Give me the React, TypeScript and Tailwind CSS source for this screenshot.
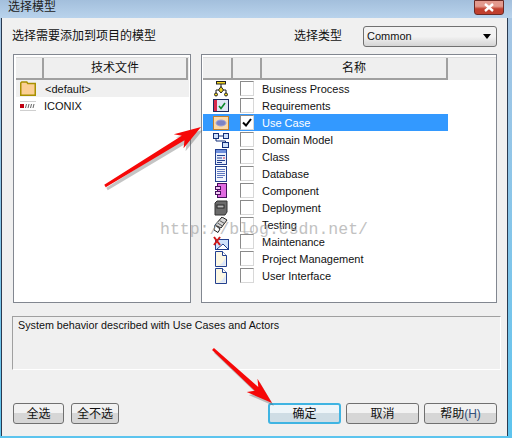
import { type ReactNode } from "react";

const FONT = "font-['Liberation_Sans','Noto_Sans_CJK_SC',sans-serif]";

function BusinessIcon() {
  return (
    <svg width="16" height="16" viewBox="0 0 16 16">
      <rect x="3.500" y="0.500" width="9" height="2.500" fill="#f2d41e" stroke="#222" />
      <path d="M8 3v3M3 12V9h10v3" fill="none" stroke="#222" />
      <path d="M8 5.500l2.500 3.500-2.500 3-2.500-3z" fill="#f2d41e" stroke="#222" />
      <circle cx="3" cy="13.500" r="1.500" fill="#f2d41e" stroke="#222" />
      <circle cx="13" cy="13.500" r="1.500" fill="#f2d41e" stroke="#222" />
    </svg>
  );
}

function RequirementsIcon() {
  return (
    <svg width="16" height="16" viewBox="0 0 16 16">
      <rect x="0.500" y="1.500" width="15" height="12" fill="#dfe6f5" stroke="#1c2a5c" />
      <rect x="1" y="2" width="3" height="11" fill="#d8284a" />
      <path d="M6 8l2 2.500 4-5.500" fill="none" stroke="#0a8a2a" strokeWidth="1.600" />
    </svg>
  );
}

function UseCaseIcon() {
  return (
    <svg width="16" height="16" viewBox="0 0 16 16">
      <rect x="0.500" y="1.500" width="15" height="13" fill="#fbd9a8" stroke="#c08030" />
      <ellipse cx="8" cy="8" rx="5" ry="3" fill="#7d83c4" stroke="#9da2d8" />
    </svg>
  );
}

function DomainIcon() {
  return (
    <svg width="16" height="16" viewBox="0 0 16 16">
      <rect x="0.500" y="1.500" width="5" height="5" fill="#cfe0fa" stroke="#14307a" />
      <rect x="10.500" y="1.500" width="5" height="5" fill="#cfe0fa" stroke="#14307a" />
      <rect x="9.500" y="10.500" width="6" height="5" fill="#cfe0fa" stroke="#14307a" />
      <path d="M5.500 4h5M3 6.500V9h9.500v1.500" fill="none" stroke="#14307a" />
    </svg>
  );
}

function ClassIcon() {
  return (
    <svg width="16" height="16" viewBox="0 0 16 16">
      <rect x="2.500" y="0.500" width="11" height="15" fill="#e9effc" stroke="#23408f" />
      <rect x="3" y="1" width="10" height="3" fill="#6f8fdc" />
      <path d="M4 6.500h8M4 9h5M4 11.500h8M4 13.500h5" stroke="#23408f" />
      <path d="M10 9h2" stroke="#d8284a" />
    </svg>
  );
}

function DatabaseIcon() {
  return (
    <svg width="16" height="16" viewBox="0 0 16 16">
      <rect x="2.500" y="0.500" width="11" height="15" fill="#f3f6fd" stroke="#23408f" />
      <path d="M4 3.500h8M4 5.500h8M4 7.500h8M4 9.500h8M4 11.500h6" stroke="#5f78bf" />
    </svg>
  );
}

function ComponentIcon() {
  return (
    <svg width="16" height="16" viewBox="0 0 16 16">
      <rect x="4.500" y="0.500" width="9" height="14" fill="#e06be0" stroke="#44105c" />
      <rect x="2.500" y="3.500" width="5" height="3" fill="#f4c8f4" stroke="#44105c" />
      <rect x="2.500" y="8.500" width="5" height="3" fill="#f4c8f4" stroke="#44105c" />
    </svg>
  );
}

function DeploymentIcon() {
  return (
    <svg width="16" height="16" viewBox="0 0 16 16">
      <path d="M2 3l2-2h10v11l-2 3H2z" fill="#6b6b6b" stroke="#333" />
      <rect x="4" y="5" width="7" height="3" fill="#b5b5b5" stroke="#2a2a2a" />
    </svg>
  );
}

function TestingIcon() {
  return (
    <svg width="16" height="16" viewBox="0 0 16 16">
      <path d="M2 8L9 0l5 3-6 8z" fill="#d6d6d6" stroke="#222" />
      <path d="M4.500 6l5 3M6.500 3.500l5 3" stroke="#555" />
      <path d="M2 8l5 4-2 3.500-4-2.500z" fill="#fff" stroke="#222" />
    </svg>
  );
}

function MaintenanceIcon() {
  return (
    <svg width="16" height="16" viewBox="0 0 16 16">
      <rect x="2.500" y="5.500" width="13" height="10" fill="#cfe2fb" stroke="#23408f" />
      <path d="M4 15l6-5 5 5" fill="#fff" stroke="#23408f" />
      <path d="M1 3l6 8M7 3l-6 8" stroke="#d01818" strokeWidth="2" />
    </svg>
  );
}

function PageIcon() {
  return (
    <svg width="16" height="16" viewBox="0 0 16 16">
      <path d="M2.500 0.500h7l4 4v11h-11z" fill="#fdf8e4" stroke="#23408f" />
      <path d="M9.500 0.500v4h4" fill="#fff" stroke="#23408f" />
      <path d="M3.500 14.500c4 0 7-3 9-8v8z" fill="#dbe6fa" />
    </svg>
  );
}

function FolderIcon() {
  return (
    <svg width="16" height="15" viewBox="0 0 16 15">
      <path d="M0.750 3.500V2l1-1h5l1 1.500h7.500v11.750h-14.500z" fill="#fbcf95" stroke="#a89000" strokeWidth="1.500" />
    </svg>
  );
}

function IconixIcon() {
  return (
    <svg width="16" height="10" viewBox="0 0 16 10">
      <path d="M0 0.500h16M0 9.500h16" stroke="#cfcfcf" />
      <rect x="0" y="3" width="4" height="4" fill="#c00010" />
      <path d="M5.500 7l1-4M8 7l1-4M10.500 7l1-4M13 7l1-4" stroke="#666" />
    </svg>
  );
}

const models: { name: string; icon: ReactNode; checked?: boolean; selected?: boolean }[] = [
  { name: "Business Process", icon: <BusinessIcon /> },
  { name: "Requirements", icon: <RequirementsIcon /> },
  { name: "Use Case", icon: <UseCaseIcon />, checked: true, selected: true },
  { name: "Domain Model", icon: <DomainIcon /> },
  { name: "Class", icon: <ClassIcon /> },
  { name: "Database", icon: <DatabaseIcon /> },
  { name: "Component", icon: <ComponentIcon /> },
  { name: "Deployment", icon: <DeploymentIcon /> },
  { name: "Testing", icon: <TestingIcon /> },
  { name: "Maintenance", icon: <MaintenanceIcon /> },
  { name: "Project Management", icon: <PageIcon /> },
  { name: "User Interface", icon: <PageIcon /> },
];

function HeaderCell({ width, children }: { width: string; children?: ReactNode }) {
  return (
    <div
      className={`${width} h-full flex items-center justify-center border-r-2 border-b-2 border-[#a0a0a0] text-[12px] text-[#111]`}
    >
      {children}
    </div>
  );
}

function Btn({ width, focused, children }: { width: string; focused?: boolean; children: ReactNode }) {
  return (
    <button
      className={`${width} h-[21px] flex items-center justify-center rounded-[3px] text-[12px] text-[#111] ${
        focused
          ? "border-2 border-[#3fb4e2] bg-gradient-to-b from-[#eef5f9] from-50% to-[#cfdde5] to-50%"
          : "border border-[#707070] bg-gradient-to-b from-[#f2f2f2] from-50% to-[#d6d6d6] to-50%"
      }`}
    >
      {children}
    </button>
  );
}

function Arrow({ x1, y1, x2, y2 }: { x1: number; y1: number; x2: number; y2: number }) {
  // tapered shaft plus a barbed head, with a soft grey shadow below it
  const ang = Math.atan2(y2 - y1, x2 - x1);
  const len = Math.hypot(x2 - x1, y2 - y1);
  const pt = (along: number, side: number) => {
    const x = x2 - along * Math.cos(ang) - side * Math.sin(ang);
    const y = y2 - along * Math.sin(ang) + side * Math.cos(ang);
    return `${x},${y}`;
  };
  const shape = [
    `${x2},${y2}`,
    pt(26, 9),
    pt(21, 2.6),
    pt(len, 1.4),
    pt(len, -1.4),
    pt(21, -2.6),
    pt(27, -8),
  ].join(" ");
  return (
    <g>
      <polygon points={shape} fill="#555" opacity="0.35" transform="translate(2 3)" />
      <polygon points={shape} fill="#f60808" />
    </g>
  );
}

export default function App() {
  return (
    <div className={`${FONT} relative w-[512px] h-[438px] overflow-hidden bg-gradient-to-b from-[#a9c6e4] to-[#5cc4ee] flex flex-col`}>
      {/* Title bar */}
      <div className="h-[18px] shrink-0 flex items-start justify-between pl-[8px] pr-[8px] bg-gradient-to-b from-[#a3bfdc] to-[#b9d3ec]">
        <span className="text-[12px] leading-[14px] text-[#222]">选择模型</span>
        <div className="w-[30px] h-[15px] rounded-b-[3px] border border-[#6b2a25] bg-gradient-to-b from-[#e39a8e] from-40% to-[#c0402f] to-60% flex items-center justify-center">
          <svg width="12" height="9" viewBox="0 0 12 9">
            <path d="M2 1l8 7M10 1L2 8" stroke="#fff" strokeWidth="2.400" />
          </svg>
        </div>
      </div>

      {/* Client area */}
      <div className="flex-1 ml-[1px] mr-[4px] mb-[2px] border-l border-r border-[#2a3a50] bg-[#f0f0f0] flex flex-col pl-[10px] pr-[9px]">
        <div className="h-[36px] shrink-0 flex items-center justify-between text-[12px] text-[#111]">
          <span>选择需要添加到项目的模型</span>
          <div className="flex items-center gap-[21px]">
            <span>选择类型</span>
            <div className="w-[134px] h-[21px] flex items-center justify-between pl-[3px] pr-[5px] rounded-[3px] border border-[#707070] bg-gradient-to-b from-[#f2f2f2] from-50% to-[#d4d4d4] text-[11px] text-[#111] mr-[1px]">
              <span>Common</span>
              <span className="w-0 h-0 border-l-[4px] border-r-[4px] border-t-[5px] border-l-transparent border-r-transparent border-t-black" />
            </div>
          </div>
        </div>

        <div className="h-[249px] shrink-0 flex gap-[10px] pl-[1px]">
          {/* Technology files */}
          <div className="w-[178px] border border-[#828790] bg-white pt-[2px] pl-[2px] pr-[1px]">
            <div className="h-[23px] flex bg-[#efefef] border-t border-[#ddd]">
              <HeaderCell width="w-[28px]" />
              <HeaderCell width="w-[144px]">技术文件</HeaderCell>
            </div>
            <div className="h-[17px] flex items-center bg-[#f0f0f0] text-[11px] text-[#111]">
              <span className="w-[28px] pl-[4px] flex">
                <FolderIcon />
              </span>
              <span className="pl-[1px] pt-[1px]">&lt;default&gt;</span>
            </div>
            <div className="h-[17px] flex items-center text-[11px] text-[#111]">
              <span className="w-[28px] pl-[4px] flex">
                <IconixIcon />
              </span>
              <span className="pt-[1px]">ICONIX</span>
            </div>
          </div>

          {/* Model list */}
          <div className="w-[296px] border border-[#828790] bg-white pt-[2px] pl-[1px]">
            <div className="h-[23px] flex bg-[#efefef] border-t border-[#ddd]">
              <HeaderCell width="w-[30px]" />
              <HeaderCell width="w-[29px]" />
              <HeaderCell width="w-[186px]">名称</HeaderCell>
            </div>
            {models.map((m) => (
              <div key={m.name} className="h-[17px] flex items-center text-[11px]">
                <span className={`w-[30px] h-full flex items-center pl-[10px] ${m.selected ? "bg-[#3399ff]" : ""}`}>
                  {m.icon}
                </span>
                <span className={`w-[29px] h-full flex items-center pl-[7px] ${m.selected ? "bg-[#3399ff]" : ""}`}>
                  <span className="w-[14px] h-[15px] flex items-center justify-center bg-white border-t border-l border-[#8a8a8a] border-r border-b border-r-[#d8d8d8] border-b-[#d8d8d8]">
                    {m.checked && (
                      <svg width="10" height="9" viewBox="0 0 10 9">
                        <path d="M1 4.500l3 3 5-6.500" fill="none" stroke="#000" strokeWidth="2" />
                      </svg>
                    )}
                  </span>
                </span>
                <span className={`w-[186px] h-full flex items-center pt-[1px] ${m.selected ? "bg-[#3399ff] text-white" : "text-[#111]"}`}>
                  {m.name}
                </span>
              </div>
            ))}
          </div>
        </div>

        {/* Description */}
        <div className="h-[54px] shrink-0 mt-[13px] mr-[-3px] border-t border-l border-[#a0a0a0] border-r border-b border-r-white border-b-white pl-[5px] pt-[1px] text-[10.75px] leading-[15px] text-[#111]">
          System behavior described with Use Cases and Actors
        </div>

        {/* Buttons */}
        <div className="flex justify-between mt-[33px] pl-[1px]">
          <div className="flex gap-[7px]">
            <Btn width="w-[51px]">全选</Btn>
            <Btn width="w-[48px]">全不选</Btn>
          </div>
          <div className="flex gap-[5px] mr-[1px]">
            <Btn width="w-[73px]" focused>
              确定
            </Btn>
            <Btn width="w-[73px]">取消</Btn>
            <Btn width="w-[73px]">
              帮助<span className="text-[#33507a]">(H)</span>
            </Btn>
          </div>
        </div>
      </div>

      {/* Watermark over the lists */}
      <div className="absolute left-[160px] top-[218px] font-['Liberation_Mono',monospace] text-[16.5px] leading-[24px] text-[#a8a8a8] opacity-70 whitespace-nowrap">
        http://blog.csdn.net/
      </div>

      {/* Red annotation arrows */}
      <svg className="absolute left-0 top-0 pointer-events-none" width="512" height="438">
        <Arrow x1={105} y1={186} x2={201} y2={127} />
        <Arrow x1={213} y1={349} x2={272} y2={403} />
      </svg>
    </div>
  );
}
